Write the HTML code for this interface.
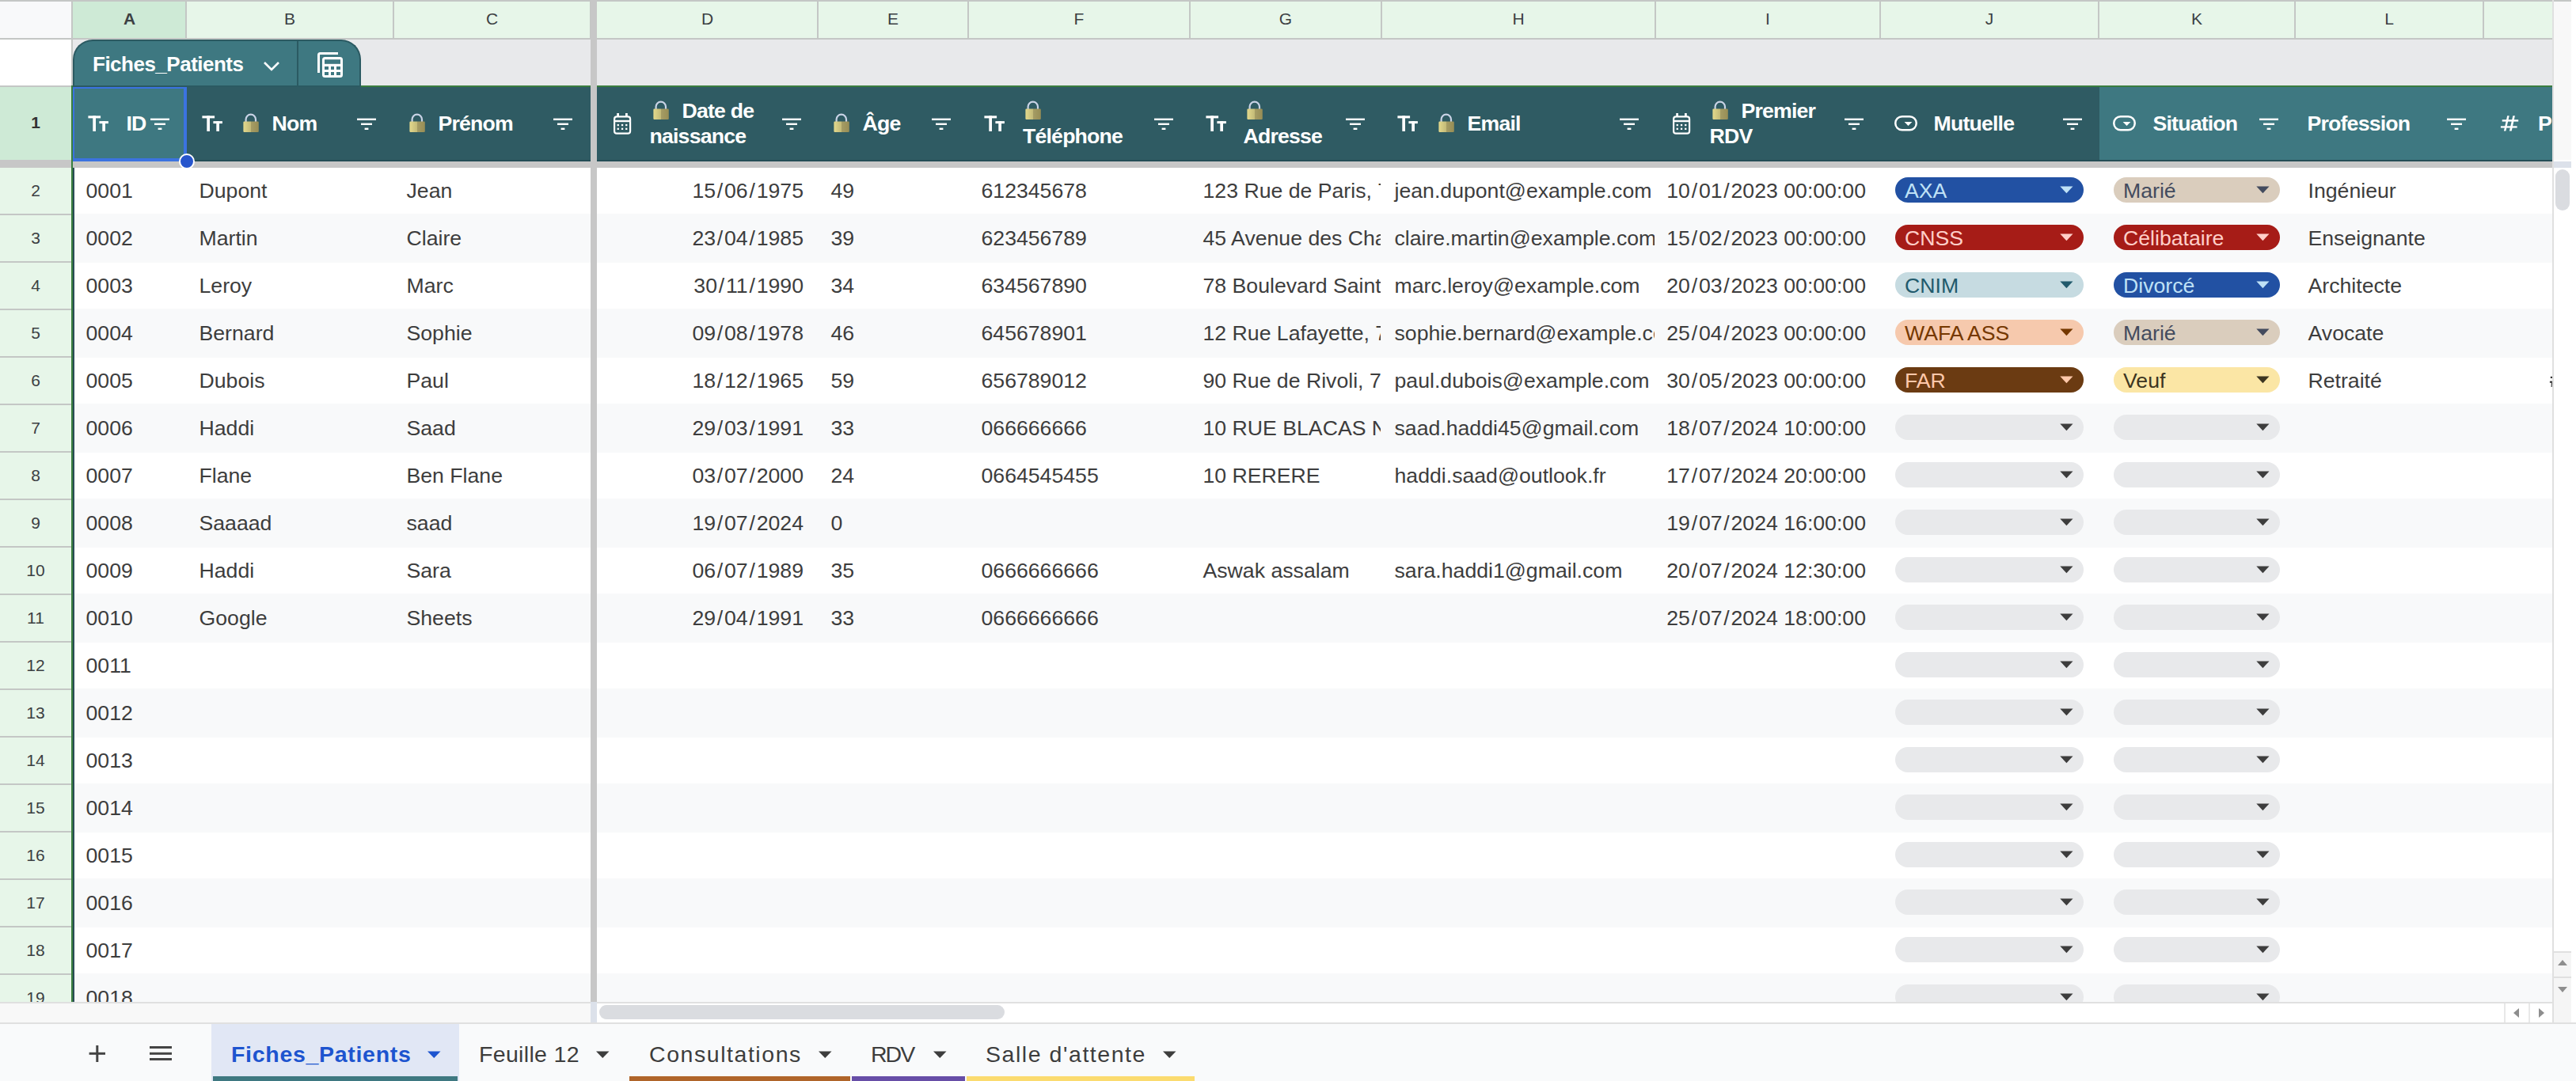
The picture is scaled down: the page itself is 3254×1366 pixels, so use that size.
<!DOCTYPE html>
<html><head><meta charset="utf-8"><title>Fiches_Patients</title>
<style>
html,body{margin:0;padding:0}
body{width:3254px;height:1366px;position:relative;overflow:hidden;background:#fff;font-family:"Liberation Sans",sans-serif}
body div, body svg{position:absolute;box-sizing:border-box}
.t{white-space:nowrap;line-height:1}
.sl{padding:0 1.8px}
</style></head><body>
<div style="left:0px;top:0px;width:3248px;height:50px;background:#c4c7c5;"></div>
<div style="left:0px;top:2px;width:90px;height:46px;background:#f8f9fa;"></div>
<div style="left:92px;top:2px;width:3132px;height:46px;background:#e7f6e9;"></div>
<div style="left:92px;top:2px;width:143px;height:46px;background:#ceead6;"></div>
<div style="left:234px;top:2px;width:2px;height:46px;background:#c4c7c5;"></div>
<div style="left:496px;top:2px;width:2px;height:46px;background:#c4c7c5;"></div>
<div style="left:745px;top:2px;width:2px;height:46px;background:#c4c7c5;"></div>
<div style="left:1032px;top:2px;width:2px;height:46px;background:#c4c7c5;"></div>
<div style="left:1222px;top:2px;width:2px;height:46px;background:#c4c7c5;"></div>
<div style="left:1502px;top:2px;width:2px;height:46px;background:#c4c7c5;"></div>
<div style="left:1744px;top:2px;width:2px;height:46px;background:#c4c7c5;"></div>
<div style="left:2090px;top:2px;width:2px;height:46px;background:#c4c7c5;"></div>
<div style="left:2374px;top:2px;width:2px;height:46px;background:#c4c7c5;"></div>
<div style="left:2650px;top:2px;width:2px;height:46px;background:#c4c7c5;"></div>
<div style="left:2898px;top:2px;width:2px;height:46px;background:#c4c7c5;"></div>
<div style="left:3136px;top:2px;width:2px;height:46px;background:#c4c7c5;"></div>
<div style="left:746px;top:0px;width:8px;height:1266px;background:#c7c7c7;"></div>
<div class="t" style="left:-36.5px;width:400px;top:12.72px;font-size:21px;color:#3c4043;font-weight:700;text-align:center;">A</div>
<div class="t" style="left:166.0px;width:400px;top:12.72px;font-size:21px;color:#3c4043;font-weight:400;text-align:center;">B</div>
<div class="t" style="left:421.5px;width:400px;top:12.72px;font-size:21px;color:#3c4043;font-weight:400;text-align:center;">C</div>
<div class="t" style="left:693.5px;width:400px;top:12.72px;font-size:21px;color:#3c4043;font-weight:400;text-align:center;">D</div>
<div class="t" style="left:928.0px;width:400px;top:12.72px;font-size:21px;color:#3c4043;font-weight:400;text-align:center;">E</div>
<div class="t" style="left:1163.0px;width:400px;top:12.72px;font-size:21px;color:#3c4043;font-weight:400;text-align:center;">F</div>
<div class="t" style="left:1424.0px;width:400px;top:12.72px;font-size:21px;color:#3c4043;font-weight:400;text-align:center;">G</div>
<div class="t" style="left:1718.0px;width:400px;top:12.72px;font-size:21px;color:#3c4043;font-weight:400;text-align:center;">H</div>
<div class="t" style="left:2033.0px;width:400px;top:12.72px;font-size:21px;color:#3c4043;font-weight:400;text-align:center;">I</div>
<div class="t" style="left:2313.0px;width:400px;top:12.72px;font-size:21px;color:#3c4043;font-weight:400;text-align:center;">J</div>
<div class="t" style="left:2575.0px;width:400px;top:12.72px;font-size:21px;color:#3c4043;font-weight:400;text-align:center;">K</div>
<div class="t" style="left:2818.0px;width:400px;top:12.72px;font-size:21px;color:#3c4043;font-weight:400;text-align:center;">L</div>
<div style="left:3226px;top:2px;width:22px;height:200px;background:#f8f8f8;"></div>
<div style="left:3224px;top:0px;width:2px;height:1266px;background:#e0e0e0;"></div>
<div style="left:0px;top:50px;width:90px;height:58px;background:#ffffff;"></div>
<div style="left:90px;top:50px;width:2px;height:58px;background:#c4c7c5;"></div>
<div style="left:92px;top:50px;width:3132px;height:58px;background:#e8e9eb;"></div>
<div style="left:746px;top:50px;width:8px;height:58px;background:#c7c7c7;"></div>
<div style="left:92px;top:50px;width:364px;height:58px;background:#3e7881;border:2px solid #2b5a62;border-bottom:none;border-radius:25px 25px 0 0;"></div>
<div style="left:375px;top:52px;width:2px;height:56px;background:#2b5a62"></div>
<div class="t" style="left:117px;top:67.99px;font-size:26px;color:#ffffff;font-weight:700;letter-spacing:-0.5px">Fiches_Patients</div>
<svg style="left:332px;top:76px" width="22" height="16" viewBox="0 0 22 16"><path d="M2 3 L11 12 L20 3" fill="none" stroke="#fff" stroke-width="2.6"/></svg>
<svg style="left:398px;top:63px" width="40" height="40" viewBox="0 0 40 40"><path d="M4.5 29 V6.5 Q4.5 4.5 6.5 4.5 H29" fill="none" stroke="#fff" stroke-width="3"/><rect x="9" y="9" width="26" height="26" rx="3.5" fill="#fff"/><rect x="12" y="12.2" width="20" height="5.6" fill="#3e7881"/><rect x="12" y="21" width="5" height="4" fill="#3e7881"/><rect x="20" y="21" width="4" height="4" fill="#3e7881"/><rect x="27" y="21" width="5" height="4" fill="#3e7881"/><rect x="12" y="28" width="5" height="4" fill="#3e7881"/><rect x="20" y="28" width="4" height="4" fill="#3e7881"/><rect x="27" y="28" width="5" height="4" fill="#3e7881"/></svg>
<div style="left:0px;top:108px;width:90px;height:94px;background:#ceead6;"></div>
<div style="left:0px;top:108px;width:90px;height:2px;background:#c4c7c5;"></div>
<div style="left:90px;top:108px;width:2px;height:94px;background:#c4c7c5;"></div>
<div class="t" style="left:-155px;width:400px;top:144.22px;font-size:21px;color:#333;font-weight:700;text-align:center;">1</div>
<div style="left:92px;top:108px;width:654px;height:96px;background:#2f5b63;"></div>
<div style="left:754px;top:108px;width:2470px;height:96px;background:#2f5b63;"></div>
<div style="left:2652px;top:108px;width:572px;height:96px;background:#3e7881;"></div>
<div style="left:92px;top:108px;width:144px;height:96px;background:#3e7881;"></div>
<div style="left:92px;top:108px;width:654px;height:2px;background:#3a7d3f;"></div>
<div style="left:754px;top:108px;width:2470px;height:2px;background:#3a7d3f;"></div>
<div style="left:92px;top:108px;width:364px;height:2px;background:#2b5a62;"></div>
<div style="left:92px;top:202px;width:654px;height:2px;background:#244d56;"></div>
<div style="left:754px;top:202px;width:2470px;height:2px;background:#244d56;"></div>
<div style="left:0px;top:202px;width:92px;height:10px;background:#c7c7c7;"></div>
<div style="left:92px;top:204px;width:3132px;height:8px;background:#c7c7c7;"></div>
<div style="left:3226px;top:204px;width:22px;height:8px;background:#dce1ea;"></div>
<svg style="left:111px;top:146px" width="28" height="22" viewBox="0 0 28 22"><rect x="0.4" y="0.3" width="15.7" height="3.1" fill="#fff"/><rect x="6.3" y="0.3" width="3.7" height="19.6" fill="#fff"/><rect x="14.4" y="7.1" width="11.5" height="3" fill="#fff"/><rect x="18.3" y="7.1" width="3.7" height="12.8" fill="#fff"/></svg>
<div class="t" style="left:159.5px;top:143.42px;font-size:26.67px;color:#ffffff;font-weight:700;letter-spacing:-0.8px">ID</div>
<svg style="left:189px;top:149px" width="26" height="16" viewBox="0 0 26 16"><rect x="1" y="0.6" width="24" height="2.4" fill="#fff"/><rect x="6" y="6.6" width="14" height="2.4" fill="#fff"/><rect x="10.6" y="12.6" width="4.8" height="2.4" fill="#fff"/></svg>
<svg style="left:255px;top:146px" width="28" height="22" viewBox="0 0 28 22"><rect x="0.4" y="0.3" width="15.7" height="3.1" fill="#fff"/><rect x="6.3" y="0.3" width="3.7" height="19.6" fill="#fff"/><rect x="14.4" y="7.1" width="11.5" height="3" fill="#fff"/><rect x="18.3" y="7.1" width="3.7" height="12.8" fill="#fff"/></svg>
<svg style="left:306px;top:143px" width="22" height="25" viewBox="0 0 22 25"><defs><linearGradient id="lg306" x1="0" x2="1" y1="0" y2="0"><stop offset="0" stop-color="#e3d98c"/><stop offset="0.5" stop-color="#c2b977"/><stop offset="0.52" stop-color="#a59c64"/><stop offset="1" stop-color="#978d55"/></linearGradient></defs><path d="M4.6 11 V7.8 A6.2 6.2 0 0 1 17 7.8 V11" fill="none" stroke="#c9d3e6" stroke-width="2.2"/><rect x="1.4" y="10.6" width="19.4" height="13.4" rx="1.2" fill="url(#lg306)"/></svg>
<div class="t" style="left:343.5px;top:143.42px;font-size:26.67px;color:#ffffff;font-weight:700;letter-spacing:-0.8px">Nom</div>
<svg style="left:450px;top:149px" width="26" height="16" viewBox="0 0 26 16"><rect x="1" y="0.6" width="24" height="2.4" fill="#fff"/><rect x="6" y="6.6" width="14" height="2.4" fill="#fff"/><rect x="10.6" y="12.6" width="4.8" height="2.4" fill="#fff"/></svg>
<svg style="left:516px;top:143px" width="22" height="25" viewBox="0 0 22 25"><defs><linearGradient id="lg516" x1="0" x2="1" y1="0" y2="0"><stop offset="0" stop-color="#e3d98c"/><stop offset="0.5" stop-color="#c2b977"/><stop offset="0.52" stop-color="#a59c64"/><stop offset="1" stop-color="#978d55"/></linearGradient></defs><path d="M4.6 11 V7.8 A6.2 6.2 0 0 1 17 7.8 V11" fill="none" stroke="#c9d3e6" stroke-width="2.2"/><rect x="1.4" y="10.6" width="19.4" height="13.4" rx="1.2" fill="url(#lg516)"/></svg>
<div class="t" style="left:553.5px;top:143.42px;font-size:26.67px;color:#ffffff;font-weight:700;letter-spacing:-0.8px">Prénom</div>
<svg style="left:698px;top:149px" width="26" height="16" viewBox="0 0 26 16"><rect x="1" y="0.6" width="24" height="2.4" fill="#fff"/><rect x="6" y="6.6" width="14" height="2.4" fill="#fff"/><rect x="10.6" y="12.6" width="4.8" height="2.4" fill="#fff"/></svg>
<svg style="left:775px;top:143px" width="24" height="28" viewBox="0 0 24 28"><rect x="1.1" y="4.4" width="20" height="21.3" rx="3" fill="none" stroke="#fff" stroke-width="2.2"/><rect x="1" y="8.8" width="21" height="2.4" fill="#fff"/><rect x="4.2" y="0" width="2.8" height="4" fill="#fff"/><rect x="15" y="0" width="2.8" height="4" fill="#fff"/><rect x="4.6" y="13.9" width="2.3" height="2.3" fill="#fff"/><rect x="9.9" y="13.9" width="2.3" height="2.3" fill="#fff"/><rect x="15.1" y="13.9" width="2.3" height="2.3" fill="#fff"/><rect x="4.6" y="18.7" width="2.3" height="2.3" fill="#fff"/><rect x="9.9" y="18.7" width="2.3" height="2.3" fill="#fff"/><rect x="15.1" y="18.7" width="2.3" height="2.3" fill="#fff"/></svg>
<svg style="left:824px;top:127px" width="22" height="25" viewBox="0 0 22 25"><defs><linearGradient id="lg824" x1="0" x2="1" y1="0" y2="0"><stop offset="0" stop-color="#e3d98c"/><stop offset="0.5" stop-color="#c2b977"/><stop offset="0.52" stop-color="#a59c64"/><stop offset="1" stop-color="#978d55"/></linearGradient></defs><path d="M4.6 11 V7.8 A6.2 6.2 0 0 1 17 7.8 V11" fill="none" stroke="#c9d3e6" stroke-width="2.2"/><rect x="1.4" y="10.6" width="19.4" height="13.4" rx="1.2" fill="url(#lg824)"/></svg>
<div class="t" style="left:861.5px;top:127.42px;font-size:26.67px;color:#ffffff;font-weight:700;letter-spacing:-0.8px">Date de</div>
<div class="t" style="left:820.5px;top:159.42px;font-size:26.67px;color:#ffffff;font-weight:700;letter-spacing:-0.8px">naissance</div>
<svg style="left:987px;top:149px" width="26" height="16" viewBox="0 0 26 16"><rect x="1" y="0.6" width="24" height="2.4" fill="#fff"/><rect x="6" y="6.6" width="14" height="2.4" fill="#fff"/><rect x="10.6" y="12.6" width="4.8" height="2.4" fill="#fff"/></svg>
<svg style="left:1052px;top:143px" width="22" height="25" viewBox="0 0 22 25"><defs><linearGradient id="lg1052" x1="0" x2="1" y1="0" y2="0"><stop offset="0" stop-color="#e3d98c"/><stop offset="0.5" stop-color="#c2b977"/><stop offset="0.52" stop-color="#a59c64"/><stop offset="1" stop-color="#978d55"/></linearGradient></defs><path d="M4.6 11 V7.8 A6.2 6.2 0 0 1 17 7.8 V11" fill="none" stroke="#c9d3e6" stroke-width="2.2"/><rect x="1.4" y="10.6" width="19.4" height="13.4" rx="1.2" fill="url(#lg1052)"/></svg>
<div class="t" style="left:1089.5px;top:143.42px;font-size:26.67px;color:#ffffff;font-weight:700;letter-spacing:-0.8px">Âge</div>
<svg style="left:1176px;top:149px" width="26" height="16" viewBox="0 0 26 16"><rect x="1" y="0.6" width="24" height="2.4" fill="#fff"/><rect x="6" y="6.6" width="14" height="2.4" fill="#fff"/><rect x="10.6" y="12.6" width="4.8" height="2.4" fill="#fff"/></svg>
<svg style="left:1243px;top:146px" width="28" height="22" viewBox="0 0 28 22"><rect x="0.4" y="0.3" width="15.7" height="3.1" fill="#fff"/><rect x="6.3" y="0.3" width="3.7" height="19.6" fill="#fff"/><rect x="14.4" y="7.1" width="11.5" height="3" fill="#fff"/><rect x="18.3" y="7.1" width="3.7" height="12.8" fill="#fff"/></svg>
<svg style="left:1294px;top:127px" width="22" height="25" viewBox="0 0 22 25"><defs><linearGradient id="lg1294" x1="0" x2="1" y1="0" y2="0"><stop offset="0" stop-color="#e3d98c"/><stop offset="0.5" stop-color="#c2b977"/><stop offset="0.52" stop-color="#a59c64"/><stop offset="1" stop-color="#978d55"/></linearGradient></defs><path d="M4.6 11 V7.8 A6.2 6.2 0 0 1 17 7.8 V11" fill="none" stroke="#c9d3e6" stroke-width="2.2"/><rect x="1.4" y="10.6" width="19.4" height="13.4" rx="1.2" fill="url(#lg1294)"/></svg>
<div class="t" style="left:1292px;top:159.42px;font-size:26.67px;color:#ffffff;font-weight:700;letter-spacing:-0.8px">Téléphone</div>
<svg style="left:1457px;top:149px" width="26" height="16" viewBox="0 0 26 16"><rect x="1" y="0.6" width="24" height="2.4" fill="#fff"/><rect x="6" y="6.6" width="14" height="2.4" fill="#fff"/><rect x="10.6" y="12.6" width="4.8" height="2.4" fill="#fff"/></svg>
<svg style="left:1523px;top:146px" width="28" height="22" viewBox="0 0 28 22"><rect x="0.4" y="0.3" width="15.7" height="3.1" fill="#fff"/><rect x="6.3" y="0.3" width="3.7" height="19.6" fill="#fff"/><rect x="14.4" y="7.1" width="11.5" height="3" fill="#fff"/><rect x="18.3" y="7.1" width="3.7" height="12.8" fill="#fff"/></svg>
<svg style="left:1574px;top:127px" width="22" height="25" viewBox="0 0 22 25"><defs><linearGradient id="lg1574" x1="0" x2="1" y1="0" y2="0"><stop offset="0" stop-color="#e3d98c"/><stop offset="0.5" stop-color="#c2b977"/><stop offset="0.52" stop-color="#a59c64"/><stop offset="1" stop-color="#978d55"/></linearGradient></defs><path d="M4.6 11 V7.8 A6.2 6.2 0 0 1 17 7.8 V11" fill="none" stroke="#c9d3e6" stroke-width="2.2"/><rect x="1.4" y="10.6" width="19.4" height="13.4" rx="1.2" fill="url(#lg1574)"/></svg>
<div class="t" style="left:1570.5px;top:159.42px;font-size:26.67px;color:#ffffff;font-weight:700;letter-spacing:-0.8px">Adresse</div>
<svg style="left:1699px;top:149px" width="26" height="16" viewBox="0 0 26 16"><rect x="1" y="0.6" width="24" height="2.4" fill="#fff"/><rect x="6" y="6.6" width="14" height="2.4" fill="#fff"/><rect x="10.6" y="12.6" width="4.8" height="2.4" fill="#fff"/></svg>
<svg style="left:1765px;top:146px" width="28" height="22" viewBox="0 0 28 22"><rect x="0.4" y="0.3" width="15.7" height="3.1" fill="#fff"/><rect x="6.3" y="0.3" width="3.7" height="19.6" fill="#fff"/><rect x="14.4" y="7.1" width="11.5" height="3" fill="#fff"/><rect x="18.3" y="7.1" width="3.7" height="12.8" fill="#fff"/></svg>
<svg style="left:1816px;top:143px" width="22" height="25" viewBox="0 0 22 25"><defs><linearGradient id="lg1816" x1="0" x2="1" y1="0" y2="0"><stop offset="0" stop-color="#e3d98c"/><stop offset="0.5" stop-color="#c2b977"/><stop offset="0.52" stop-color="#a59c64"/><stop offset="1" stop-color="#978d55"/></linearGradient></defs><path d="M4.6 11 V7.8 A6.2 6.2 0 0 1 17 7.8 V11" fill="none" stroke="#c9d3e6" stroke-width="2.2"/><rect x="1.4" y="10.6" width="19.4" height="13.4" rx="1.2" fill="url(#lg1816)"/></svg>
<div class="t" style="left:1853.5px;top:143.42px;font-size:26.67px;color:#ffffff;font-weight:700;letter-spacing:-0.8px">Email</div>
<svg style="left:2045px;top:149px" width="26" height="16" viewBox="0 0 26 16"><rect x="1" y="0.6" width="24" height="2.4" fill="#fff"/><rect x="6" y="6.6" width="14" height="2.4" fill="#fff"/><rect x="10.6" y="12.6" width="4.8" height="2.4" fill="#fff"/></svg>
<svg style="left:2112.5px;top:143px" width="24" height="28" viewBox="0 0 24 28"><rect x="1.1" y="4.4" width="20" height="21.3" rx="3" fill="none" stroke="#fff" stroke-width="2.2"/><rect x="1" y="8.8" width="21" height="2.4" fill="#fff"/><rect x="4.2" y="0" width="2.8" height="4" fill="#fff"/><rect x="15" y="0" width="2.8" height="4" fill="#fff"/><rect x="4.6" y="13.9" width="2.3" height="2.3" fill="#fff"/><rect x="9.9" y="13.9" width="2.3" height="2.3" fill="#fff"/><rect x="15.1" y="13.9" width="2.3" height="2.3" fill="#fff"/><rect x="4.6" y="18.7" width="2.3" height="2.3" fill="#fff"/><rect x="9.9" y="18.7" width="2.3" height="2.3" fill="#fff"/><rect x="15.1" y="18.7" width="2.3" height="2.3" fill="#fff"/></svg>
<svg style="left:2162px;top:127px" width="22" height="25" viewBox="0 0 22 25"><defs><linearGradient id="lg2162" x1="0" x2="1" y1="0" y2="0"><stop offset="0" stop-color="#e3d98c"/><stop offset="0.5" stop-color="#c2b977"/><stop offset="0.52" stop-color="#a59c64"/><stop offset="1" stop-color="#978d55"/></linearGradient></defs><path d="M4.6 11 V7.8 A6.2 6.2 0 0 1 17 7.8 V11" fill="none" stroke="#c9d3e6" stroke-width="2.2"/><rect x="1.4" y="10.6" width="19.4" height="13.4" rx="1.2" fill="url(#lg2162)"/></svg>
<div class="t" style="left:2199.5px;top:127.42px;font-size:26.67px;color:#ffffff;font-weight:700;letter-spacing:-0.8px">Premier</div>
<div class="t" style="left:2159.5px;top:159.42px;font-size:26.67px;color:#ffffff;font-weight:700;letter-spacing:-0.8px">RDV</div>
<svg style="left:2329px;top:149px" width="26" height="16" viewBox="0 0 26 16"><rect x="1" y="0.6" width="24" height="2.4" fill="#fff"/><rect x="6" y="6.6" width="14" height="2.4" fill="#fff"/><rect x="10.6" y="12.6" width="4.8" height="2.4" fill="#fff"/></svg>
<svg style="left:2393px;top:146px" width="30" height="21" viewBox="0 0 30 21"><rect x="1.25" y="1.25" width="26.5" height="17" rx="8.5" fill="none" stroke="#fff" stroke-width="2.5"/><path d="M12.6 8 H22.4 L17.5 13.1 Z" fill="#fff"/></svg>
<div class="t" style="left:2442.5px;top:143.42px;font-size:26.67px;color:#ffffff;font-weight:700;letter-spacing:-0.8px">Mutuelle</div>
<svg style="left:2605px;top:149px" width="26" height="16" viewBox="0 0 26 16"><rect x="1" y="0.6" width="24" height="2.4" fill="#fff"/><rect x="6" y="6.6" width="14" height="2.4" fill="#fff"/><rect x="10.6" y="12.6" width="4.8" height="2.4" fill="#fff"/></svg>
<svg style="left:2669px;top:146px" width="30" height="21" viewBox="0 0 30 21"><rect x="1.25" y="1.25" width="26.5" height="17" rx="8.5" fill="none" stroke="#fff" stroke-width="2.5"/><path d="M12.6 8 H22.4 L17.5 13.1 Z" fill="#fff"/></svg>
<div class="t" style="left:2719.5px;top:143.42px;font-size:26.67px;color:#ffffff;font-weight:700;letter-spacing:-0.8px">Situation</div>
<svg style="left:2853px;top:149px" width="26" height="16" viewBox="0 0 26 16"><rect x="1" y="0.6" width="24" height="2.4" fill="#fff"/><rect x="6" y="6.6" width="14" height="2.4" fill="#fff"/><rect x="10.6" y="12.6" width="4.8" height="2.4" fill="#fff"/></svg>
<div class="t" style="left:2914.5px;top:143.42px;font-size:26.67px;color:#ffffff;font-weight:700;letter-spacing:-0.8px">Profession</div>
<svg style="left:3090px;top:149px" width="26" height="16" viewBox="0 0 26 16"><rect x="1" y="0.6" width="24" height="2.4" fill="#fff"/><rect x="6" y="6.6" width="14" height="2.4" fill="#fff"/><rect x="10.6" y="12.6" width="4.8" height="2.4" fill="#fff"/></svg>
<div style="left:3137px;top:108px;width:87px;height:94px;overflow:hidden">
<svg style="left:21px;top:37px" width="26" height="23" viewBox="0 0 26 23"><rect x="2.7" y="6.2" width="20.5" height="2.4" fill="#fff"/><rect x="0.9" y="14.3" width="20.7" height="2.3" fill="#fff"/><path d="M9.2 1.3 H11.7 L7.4 20.6 H4.9 Z" fill="#fff"/><path d="M16.3 1.3 H18.9 L14.7 20.6 H11.9 Z" fill="#fff"/></svg>
<div class="t" style="left:69px;top:35.42px;font-size:26.67px;color:#ffffff;font-weight:700;letter-spacing:-0.8px">P</div>
</div>
<div style="left:92px;top:110px;width:144px;height:94px;border:solid #3b73e0;border-width:2px 4px 4px 2px;background:transparent"></div>
<div style="left:226px;top:194px;width:20px;height:20px;border-radius:50%;background:#2755cc;border:2px solid #fff"></div>
<div style="left:92px;top:212px;width:3132px;height:1054px;overflow:hidden">
<div style="left:0;top:0px;width:3132px;height:58px;background:#ffffff"></div>
<div style="left:0;top:58px;width:3132px;height:62px;background:#f8f9fa"></div>
<div style="left:0;top:120px;width:3132px;height:58px;background:#ffffff"></div>
<div style="left:0;top:178px;width:3132px;height:62px;background:#f8f9fa"></div>
<div style="left:0;top:240px;width:3132px;height:58px;background:#ffffff"></div>
<div style="left:0;top:298px;width:3132px;height:62px;background:#f8f9fa"></div>
<div style="left:0;top:360px;width:3132px;height:58px;background:#ffffff"></div>
<div style="left:0;top:418px;width:3132px;height:62px;background:#f8f9fa"></div>
<div style="left:0;top:480px;width:3132px;height:58px;background:#ffffff"></div>
<div style="left:0;top:538px;width:3132px;height:62px;background:#f8f9fa"></div>
<div style="left:0;top:600px;width:3132px;height:58px;background:#ffffff"></div>
<div style="left:0;top:658px;width:3132px;height:62px;background:#f8f9fa"></div>
<div style="left:0;top:720px;width:3132px;height:58px;background:#ffffff"></div>
<div style="left:0;top:778px;width:3132px;height:62px;background:#f8f9fa"></div>
<div style="left:0;top:840px;width:3132px;height:58px;background:#ffffff"></div>
<div style="left:0;top:898px;width:3132px;height:62px;background:#f8f9fa"></div>
<div style="left:0;top:960px;width:3132px;height:58px;background:#ffffff"></div>
<div style="left:0;top:1018px;width:3132px;height:62px;background:#f8f9fa"></div>
</div>
<div style="left:746px;top:212px;width:8px;height:1054px;background:#c7c7c7;"></div>
<div style="left:0px;top:212px;width:90px;height:1054px;background:#e7f6e9;"></div>
<div style="left:0px;top:270px;width:90px;height:2px;background:#c4c7c5;"></div>
<div class="t" style="left:-155px;width:400px;top:230.22px;font-size:21px;color:#3c4043;font-weight:400;text-align:center;">2</div>
<div style="left:0px;top:330px;width:90px;height:2px;background:#c4c7c5;"></div>
<div class="t" style="left:-155px;width:400px;top:290.22px;font-size:21px;color:#3c4043;font-weight:400;text-align:center;">3</div>
<div style="left:0px;top:390px;width:90px;height:2px;background:#c4c7c5;"></div>
<div class="t" style="left:-155px;width:400px;top:350.22px;font-size:21px;color:#3c4043;font-weight:400;text-align:center;">4</div>
<div style="left:0px;top:450px;width:90px;height:2px;background:#c4c7c5;"></div>
<div class="t" style="left:-155px;width:400px;top:410.22px;font-size:21px;color:#3c4043;font-weight:400;text-align:center;">5</div>
<div style="left:0px;top:510px;width:90px;height:2px;background:#c4c7c5;"></div>
<div class="t" style="left:-155px;width:400px;top:470.22px;font-size:21px;color:#3c4043;font-weight:400;text-align:center;">6</div>
<div style="left:0px;top:570px;width:90px;height:2px;background:#c4c7c5;"></div>
<div class="t" style="left:-155px;width:400px;top:530.22px;font-size:21px;color:#3c4043;font-weight:400;text-align:center;">7</div>
<div style="left:0px;top:630px;width:90px;height:2px;background:#c4c7c5;"></div>
<div class="t" style="left:-155px;width:400px;top:590.22px;font-size:21px;color:#3c4043;font-weight:400;text-align:center;">8</div>
<div style="left:0px;top:690px;width:90px;height:2px;background:#c4c7c5;"></div>
<div class="t" style="left:-155px;width:400px;top:650.22px;font-size:21px;color:#3c4043;font-weight:400;text-align:center;">9</div>
<div style="left:0px;top:750px;width:90px;height:2px;background:#c4c7c5;"></div>
<div class="t" style="left:-155px;width:400px;top:710.22px;font-size:21px;color:#3c4043;font-weight:400;text-align:center;">10</div>
<div style="left:0px;top:810px;width:90px;height:2px;background:#c4c7c5;"></div>
<div class="t" style="left:-155px;width:400px;top:770.22px;font-size:21px;color:#3c4043;font-weight:400;text-align:center;">11</div>
<div style="left:0px;top:870px;width:90px;height:2px;background:#c4c7c5;"></div>
<div class="t" style="left:-155px;width:400px;top:830.22px;font-size:21px;color:#3c4043;font-weight:400;text-align:center;">12</div>
<div style="left:0px;top:930px;width:90px;height:2px;background:#c4c7c5;"></div>
<div class="t" style="left:-155px;width:400px;top:890.22px;font-size:21px;color:#3c4043;font-weight:400;text-align:center;">13</div>
<div style="left:0px;top:990px;width:90px;height:2px;background:#c4c7c5;"></div>
<div class="t" style="left:-155px;width:400px;top:950.22px;font-size:21px;color:#3c4043;font-weight:400;text-align:center;">14</div>
<div style="left:0px;top:1050px;width:90px;height:2px;background:#c4c7c5;"></div>
<div class="t" style="left:-155px;width:400px;top:1010.22px;font-size:21px;color:#3c4043;font-weight:400;text-align:center;">15</div>
<div style="left:0px;top:1110px;width:90px;height:2px;background:#c4c7c5;"></div>
<div class="t" style="left:-155px;width:400px;top:1070.22px;font-size:21px;color:#3c4043;font-weight:400;text-align:center;">16</div>
<div style="left:0px;top:1170px;width:90px;height:2px;background:#c4c7c5;"></div>
<div class="t" style="left:-155px;width:400px;top:1130.22px;font-size:21px;color:#3c4043;font-weight:400;text-align:center;">17</div>
<div style="left:0px;top:1230px;width:90px;height:2px;background:#c4c7c5;"></div>
<div class="t" style="left:-155px;width:400px;top:1190.22px;font-size:21px;color:#3c4043;font-weight:400;text-align:center;">18</div>
<div class="t" style="left:-155px;width:400px;top:1250.22px;font-size:21px;color:#3c4043;font-weight:400;text-align:center;">19</div>
<div style="left:90px;top:108px;width:2px;height:1158px;background:#3a7f3f;"></div>
<div style="left:92px;top:212px;width:2px;height:1054px;background:#2a4d57;"></div>
<div style="left:0;top:0;width:3254px;height:1266px;overflow:hidden">
<div style="left:92px;top:212px;width:142px;height:60px;overflow:hidden">
<div class="t" style="left:16.5px;top:16.42px;font-size:26.67px;color:#3d3d3d;font-weight:400;">0001</div>
</div>
<div style="left:235px;top:212px;width:261px;height:60px;overflow:hidden">
<div class="t" style="left:16.5px;top:16.42px;font-size:26.67px;color:#3d3d3d;font-weight:400;">Dupont</div>
</div>
<div style="left:497px;top:212px;width:248px;height:60px;overflow:hidden">
<div class="t" style="left:16.5px;top:16.42px;font-size:26.67px;color:#3d3d3d;font-weight:400;">Jean</div>
</div>
<div class="t" style="right:2239px;top:228.42px;font-size:26.67px;color:#3d3d3d;font-weight:400;text-align:right;">15<span class="sl">/</span>06<span class="sl">/</span>1975</div>
<div style="left:1033px;top:212px;width:189px;height:60px;overflow:hidden">
<div class="t" style="left:16.5px;top:16.42px;font-size:26.67px;color:#3d3d3d;font-weight:400;">49</div>
</div>
<div style="left:1223px;top:212px;width:279px;height:60px;overflow:hidden">
<div class="t" style="left:16.5px;top:16.42px;font-size:26.67px;color:#3d3d3d;font-weight:400;">612345678</div>
</div>
<div style="left:1503px;top:212px;width:241px;height:60px;overflow:hidden">
<div class="t" style="left:16.5px;top:16.42px;font-size:26.67px;color:#3d3d3d;font-weight:400;">123 Rue de Paris, 75001 Paris</div>
</div>
<div style="left:1745px;top:212px;width:345px;height:60px;overflow:hidden">
<div class="t" style="left:16.5px;top:16.42px;font-size:26.67px;color:#3d3d3d;font-weight:400;">jean.dupont@example.com</div>
</div>
<div class="t" style="right:897px;top:228.42px;font-size:26.67px;color:#3d3d3d;font-weight:400;text-align:right;">10<span class="sl">/</span>01<span class="sl">/</span>2023 00:00:00</div>
<div style="left:2394px;top:224px;width:238px;height:32px;border-radius:16px;background:#2251a3"></div>
<div class="t" style="left:2406px;top:228.42px;font-size:26.67px;color:#bfe1f6;font-weight:400;">AXA</div>
<svg style="left:2602px;top:235px" width="17" height="10" viewBox="0 0 17 10"><path d="M0.3 0.5 H16.5 L8.4 9.2 Z" fill="#bfe1f6"/></svg>
<div style="left:2670px;top:224px;width:210px;height:32px;border-radius:16px;background:#dacdbd"></div>
<div class="t" style="left:2682px;top:228.42px;font-size:26.67px;color:#434b5e;font-weight:400;">Marié</div>
<svg style="left:2850px;top:235px" width="17" height="10" viewBox="0 0 17 10"><path d="M0.3 0.5 H16.5 L8.4 9.2 Z" fill="#434b5e"/></svg>
<div style="left:2899px;top:212px;width:237px;height:60px;overflow:hidden">
<div class="t" style="left:16.5px;top:16.42px;font-size:26.67px;color:#3d3d3d;font-weight:400;">Ingénieur</div>
</div>
</div>
<div style="left:0;top:0;width:3254px;height:1266px;overflow:hidden">
<div style="left:92px;top:272px;width:142px;height:60px;overflow:hidden">
<div class="t" style="left:16.5px;top:16.42px;font-size:26.67px;color:#3d3d3d;font-weight:400;">0002</div>
</div>
<div style="left:235px;top:272px;width:261px;height:60px;overflow:hidden">
<div class="t" style="left:16.5px;top:16.42px;font-size:26.67px;color:#3d3d3d;font-weight:400;">Martin</div>
</div>
<div style="left:497px;top:272px;width:248px;height:60px;overflow:hidden">
<div class="t" style="left:16.5px;top:16.42px;font-size:26.67px;color:#3d3d3d;font-weight:400;">Claire</div>
</div>
<div class="t" style="right:2239px;top:288.42px;font-size:26.67px;color:#3d3d3d;font-weight:400;text-align:right;">23<span class="sl">/</span>04<span class="sl">/</span>1985</div>
<div style="left:1033px;top:272px;width:189px;height:60px;overflow:hidden">
<div class="t" style="left:16.5px;top:16.42px;font-size:26.67px;color:#3d3d3d;font-weight:400;">39</div>
</div>
<div style="left:1223px;top:272px;width:279px;height:60px;overflow:hidden">
<div class="t" style="left:16.5px;top:16.42px;font-size:26.67px;color:#3d3d3d;font-weight:400;">623456789</div>
</div>
<div style="left:1503px;top:272px;width:241px;height:60px;overflow:hidden">
<div class="t" style="left:16.5px;top:16.42px;font-size:26.67px;color:#3d3d3d;font-weight:400;">45 Avenue des Champs-Élysées</div>
</div>
<div style="left:1745px;top:272px;width:345px;height:60px;overflow:hidden">
<div class="t" style="left:16.5px;top:16.42px;font-size:26.67px;color:#3d3d3d;font-weight:400;">claire.martin@example.com</div>
</div>
<div class="t" style="right:897px;top:288.42px;font-size:26.67px;color:#3d3d3d;font-weight:400;text-align:right;">15<span class="sl">/</span>02<span class="sl">/</span>2023 00:00:00</div>
<div style="left:2394px;top:284px;width:238px;height:32px;border-radius:16px;background:#a61c17"></div>
<div class="t" style="left:2406px;top:288.42px;font-size:26.67px;color:#ffcfc9;font-weight:400;">CNSS</div>
<svg style="left:2602px;top:295px" width="17" height="10" viewBox="0 0 17 10"><path d="M0.3 0.5 H16.5 L8.4 9.2 Z" fill="#ffcfc9"/></svg>
<div style="left:2670px;top:284px;width:210px;height:32px;border-radius:16px;background:#a61c17"></div>
<div class="t" style="left:2682px;top:288.42px;font-size:26.67px;color:#ffcfc9;font-weight:400;">Célibataire</div>
<svg style="left:2850px;top:295px" width="17" height="10" viewBox="0 0 17 10"><path d="M0.3 0.5 H16.5 L8.4 9.2 Z" fill="#ffcfc9"/></svg>
<div style="left:2899px;top:272px;width:237px;height:60px;overflow:hidden">
<div class="t" style="left:16.5px;top:16.42px;font-size:26.67px;color:#3d3d3d;font-weight:400;">Enseignante</div>
</div>
</div>
<div style="left:0;top:0;width:3254px;height:1266px;overflow:hidden">
<div style="left:92px;top:332px;width:142px;height:60px;overflow:hidden">
<div class="t" style="left:16.5px;top:16.42px;font-size:26.67px;color:#3d3d3d;font-weight:400;">0003</div>
</div>
<div style="left:235px;top:332px;width:261px;height:60px;overflow:hidden">
<div class="t" style="left:16.5px;top:16.42px;font-size:26.67px;color:#3d3d3d;font-weight:400;">Leroy</div>
</div>
<div style="left:497px;top:332px;width:248px;height:60px;overflow:hidden">
<div class="t" style="left:16.5px;top:16.42px;font-size:26.67px;color:#3d3d3d;font-weight:400;">Marc</div>
</div>
<div class="t" style="right:2239px;top:348.42px;font-size:26.67px;color:#3d3d3d;font-weight:400;text-align:right;">30<span class="sl">/</span>11<span class="sl">/</span>1990</div>
<div style="left:1033px;top:332px;width:189px;height:60px;overflow:hidden">
<div class="t" style="left:16.5px;top:16.42px;font-size:26.67px;color:#3d3d3d;font-weight:400;">34</div>
</div>
<div style="left:1223px;top:332px;width:279px;height:60px;overflow:hidden">
<div class="t" style="left:16.5px;top:16.42px;font-size:26.67px;color:#3d3d3d;font-weight:400;">634567890</div>
</div>
<div style="left:1503px;top:332px;width:241px;height:60px;overflow:hidden">
<div class="t" style="left:16.5px;top:16.42px;font-size:26.67px;color:#3d3d3d;font-weight:400;">78 Boulevard Saint-Germain</div>
</div>
<div style="left:1745px;top:332px;width:345px;height:60px;overflow:hidden">
<div class="t" style="left:16.5px;top:16.42px;font-size:26.67px;color:#3d3d3d;font-weight:400;">marc.leroy@example.com</div>
</div>
<div class="t" style="right:897px;top:348.42px;font-size:26.67px;color:#3d3d3d;font-weight:400;text-align:right;">20<span class="sl">/</span>03<span class="sl">/</span>2023 00:00:00</div>
<div style="left:2394px;top:344px;width:238px;height:32px;border-radius:16px;background:#c6dbe1"></div>
<div class="t" style="left:2406px;top:348.42px;font-size:26.67px;color:#215a6c;font-weight:400;">CNIM</div>
<svg style="left:2602px;top:355px" width="17" height="10" viewBox="0 0 17 10"><path d="M0.3 0.5 H16.5 L8.4 9.2 Z" fill="#215a6c"/></svg>
<div style="left:2670px;top:344px;width:210px;height:32px;border-radius:16px;background:#2251a3"></div>
<div class="t" style="left:2682px;top:348.42px;font-size:26.67px;color:#bfe1f6;font-weight:400;">Divorcé</div>
<svg style="left:2850px;top:355px" width="17" height="10" viewBox="0 0 17 10"><path d="M0.3 0.5 H16.5 L8.4 9.2 Z" fill="#bfe1f6"/></svg>
<div style="left:2899px;top:332px;width:237px;height:60px;overflow:hidden">
<div class="t" style="left:16.5px;top:16.42px;font-size:26.67px;color:#3d3d3d;font-weight:400;">Architecte</div>
</div>
</div>
<div style="left:0;top:0;width:3254px;height:1266px;overflow:hidden">
<div style="left:92px;top:392px;width:142px;height:60px;overflow:hidden">
<div class="t" style="left:16.5px;top:16.42px;font-size:26.67px;color:#3d3d3d;font-weight:400;">0004</div>
</div>
<div style="left:235px;top:392px;width:261px;height:60px;overflow:hidden">
<div class="t" style="left:16.5px;top:16.42px;font-size:26.67px;color:#3d3d3d;font-weight:400;">Bernard</div>
</div>
<div style="left:497px;top:392px;width:248px;height:60px;overflow:hidden">
<div class="t" style="left:16.5px;top:16.42px;font-size:26.67px;color:#3d3d3d;font-weight:400;">Sophie</div>
</div>
<div class="t" style="right:2239px;top:408.42px;font-size:26.67px;color:#3d3d3d;font-weight:400;text-align:right;">09<span class="sl">/</span>08<span class="sl">/</span>1978</div>
<div style="left:1033px;top:392px;width:189px;height:60px;overflow:hidden">
<div class="t" style="left:16.5px;top:16.42px;font-size:26.67px;color:#3d3d3d;font-weight:400;">46</div>
</div>
<div style="left:1223px;top:392px;width:279px;height:60px;overflow:hidden">
<div class="t" style="left:16.5px;top:16.42px;font-size:26.67px;color:#3d3d3d;font-weight:400;">645678901</div>
</div>
<div style="left:1503px;top:392px;width:241px;height:60px;overflow:hidden">
<div class="t" style="left:16.5px;top:16.42px;font-size:26.67px;color:#3d3d3d;font-weight:400;">12 Rue Lafayette, 75009 Paris</div>
</div>
<div style="left:1745px;top:392px;width:345px;height:60px;overflow:hidden">
<div class="t" style="left:16.5px;top:16.42px;font-size:26.67px;color:#3d3d3d;font-weight:400;">sophie.bernard@example.com</div>
</div>
<div class="t" style="right:897px;top:408.42px;font-size:26.67px;color:#3d3d3d;font-weight:400;text-align:right;">25<span class="sl">/</span>04<span class="sl">/</span>2023 00:00:00</div>
<div style="left:2394px;top:404px;width:238px;height:32px;border-radius:16px;background:#f6c9ad"></div>
<div class="t" style="left:2406px;top:408.42px;font-size:26.67px;color:#753800;font-weight:400;">WAFA ASS</div>
<svg style="left:2602px;top:415px" width="17" height="10" viewBox="0 0 17 10"><path d="M0.3 0.5 H16.5 L8.4 9.2 Z" fill="#753800"/></svg>
<div style="left:2670px;top:404px;width:210px;height:32px;border-radius:16px;background:#dacdbd"></div>
<div class="t" style="left:2682px;top:408.42px;font-size:26.67px;color:#434b5e;font-weight:400;">Marié</div>
<svg style="left:2850px;top:415px" width="17" height="10" viewBox="0 0 17 10"><path d="M0.3 0.5 H16.5 L8.4 9.2 Z" fill="#434b5e"/></svg>
<div style="left:2899px;top:392px;width:237px;height:60px;overflow:hidden">
<div class="t" style="left:16.5px;top:16.42px;font-size:26.67px;color:#3d3d3d;font-weight:400;">Avocate</div>
</div>
</div>
<div style="left:0;top:0;width:3254px;height:1266px;overflow:hidden">
<div style="left:92px;top:452px;width:142px;height:60px;overflow:hidden">
<div class="t" style="left:16.5px;top:16.42px;font-size:26.67px;color:#3d3d3d;font-weight:400;">0005</div>
</div>
<div style="left:235px;top:452px;width:261px;height:60px;overflow:hidden">
<div class="t" style="left:16.5px;top:16.42px;font-size:26.67px;color:#3d3d3d;font-weight:400;">Dubois</div>
</div>
<div style="left:497px;top:452px;width:248px;height:60px;overflow:hidden">
<div class="t" style="left:16.5px;top:16.42px;font-size:26.67px;color:#3d3d3d;font-weight:400;">Paul</div>
</div>
<div class="t" style="right:2239px;top:468.42px;font-size:26.67px;color:#3d3d3d;font-weight:400;text-align:right;">18<span class="sl">/</span>12<span class="sl">/</span>1965</div>
<div style="left:1033px;top:452px;width:189px;height:60px;overflow:hidden">
<div class="t" style="left:16.5px;top:16.42px;font-size:26.67px;color:#3d3d3d;font-weight:400;">59</div>
</div>
<div style="left:1223px;top:452px;width:279px;height:60px;overflow:hidden">
<div class="t" style="left:16.5px;top:16.42px;font-size:26.67px;color:#3d3d3d;font-weight:400;">656789012</div>
</div>
<div style="left:1503px;top:452px;width:241px;height:60px;overflow:hidden">
<div class="t" style="left:16.5px;top:16.42px;font-size:26.67px;color:#3d3d3d;font-weight:400;">90 Rue de Rivoli, 75004 Paris</div>
</div>
<div style="left:1745px;top:452px;width:345px;height:60px;overflow:hidden">
<div class="t" style="left:16.5px;top:16.42px;font-size:26.67px;color:#3d3d3d;font-weight:400;">paul.dubois@example.com</div>
</div>
<div class="t" style="right:897px;top:468.42px;font-size:26.67px;color:#3d3d3d;font-weight:400;text-align:right;">30<span class="sl">/</span>05<span class="sl">/</span>2023 00:00:00</div>
<div style="left:2394px;top:464px;width:238px;height:32px;border-radius:16px;background:#6b3b12"></div>
<div class="t" style="left:2406px;top:468.42px;font-size:26.67px;color:#ffc8aa;font-weight:400;">FAR</div>
<svg style="left:2602px;top:475px" width="17" height="10" viewBox="0 0 17 10"><path d="M0.3 0.5 H16.5 L8.4 9.2 Z" fill="#ffc8aa"/></svg>
<div style="left:2670px;top:464px;width:210px;height:32px;border-radius:16px;background:#fbe6a5"></div>
<div class="t" style="left:2682px;top:468.42px;font-size:26.67px;color:#3c3521;font-weight:400;">Veuf</div>
<svg style="left:2850px;top:475px" width="17" height="10" viewBox="0 0 17 10"><path d="M0.3 0.5 H16.5 L8.4 9.2 Z" fill="#3c3521"/></svg>
<div style="left:2899px;top:452px;width:237px;height:60px;overflow:hidden">
<div class="t" style="left:16.5px;top:16.42px;font-size:26.67px;color:#3d3d3d;font-weight:400;">Retraité</div>
</div>
</div>
<div style="left:0;top:0;width:3254px;height:1266px;overflow:hidden">
<div style="left:92px;top:512px;width:142px;height:60px;overflow:hidden">
<div class="t" style="left:16.5px;top:16.42px;font-size:26.67px;color:#3d3d3d;font-weight:400;">0006</div>
</div>
<div style="left:235px;top:512px;width:261px;height:60px;overflow:hidden">
<div class="t" style="left:16.5px;top:16.42px;font-size:26.67px;color:#3d3d3d;font-weight:400;">Haddi</div>
</div>
<div style="left:497px;top:512px;width:248px;height:60px;overflow:hidden">
<div class="t" style="left:16.5px;top:16.42px;font-size:26.67px;color:#3d3d3d;font-weight:400;">Saad</div>
</div>
<div class="t" style="right:2239px;top:528.42px;font-size:26.67px;color:#3d3d3d;font-weight:400;text-align:right;">29<span class="sl">/</span>03<span class="sl">/</span>1991</div>
<div style="left:1033px;top:512px;width:189px;height:60px;overflow:hidden">
<div class="t" style="left:16.5px;top:16.42px;font-size:26.67px;color:#3d3d3d;font-weight:400;">33</div>
</div>
<div style="left:1223px;top:512px;width:279px;height:60px;overflow:hidden">
<div class="t" style="left:16.5px;top:16.42px;font-size:26.67px;color:#3d3d3d;font-weight:400;">066666666</div>
</div>
<div style="left:1503px;top:512px;width:241px;height:60px;overflow:hidden">
<div class="t" style="left:16.5px;top:16.42px;font-size:26.67px;color:#3d3d3d;font-weight:400;">10 RUE BLACAS NICE</div>
</div>
<div style="left:1745px;top:512px;width:345px;height:60px;overflow:hidden">
<div class="t" style="left:16.5px;top:16.42px;font-size:26.67px;color:#3d3d3d;font-weight:400;">saad.haddi45@gmail.com</div>
</div>
<div class="t" style="right:897px;top:528.42px;font-size:26.67px;color:#3d3d3d;font-weight:400;text-align:right;">18<span class="sl">/</span>07<span class="sl">/</span>2024 10:00:00</div>
<div style="left:2394px;top:524px;width:238px;height:32px;border-radius:16px;background:#e8e9eb"></div>
<svg style="left:2602px;top:535px" width="17" height="10" viewBox="0 0 17 10"><path d="M0.3 0.5 H16.5 L8.4 9.2 Z" fill="#3d3d3d"/></svg>
<div style="left:2670px;top:524px;width:210px;height:32px;border-radius:16px;background:#e8e9eb"></div>
<svg style="left:2850px;top:535px" width="17" height="10" viewBox="0 0 17 10"><path d="M0.3 0.5 H16.5 L8.4 9.2 Z" fill="#3d3d3d"/></svg>
</div>
<div style="left:0;top:0;width:3254px;height:1266px;overflow:hidden">
<div style="left:92px;top:572px;width:142px;height:60px;overflow:hidden">
<div class="t" style="left:16.5px;top:16.42px;font-size:26.67px;color:#3d3d3d;font-weight:400;">0007</div>
</div>
<div style="left:235px;top:572px;width:261px;height:60px;overflow:hidden">
<div class="t" style="left:16.5px;top:16.42px;font-size:26.67px;color:#3d3d3d;font-weight:400;">Flane</div>
</div>
<div style="left:497px;top:572px;width:248px;height:60px;overflow:hidden">
<div class="t" style="left:16.5px;top:16.42px;font-size:26.67px;color:#3d3d3d;font-weight:400;">Ben Flane</div>
</div>
<div class="t" style="right:2239px;top:588.42px;font-size:26.67px;color:#3d3d3d;font-weight:400;text-align:right;">03<span class="sl">/</span>07<span class="sl">/</span>2000</div>
<div style="left:1033px;top:572px;width:189px;height:60px;overflow:hidden">
<div class="t" style="left:16.5px;top:16.42px;font-size:26.67px;color:#3d3d3d;font-weight:400;">24</div>
</div>
<div style="left:1223px;top:572px;width:279px;height:60px;overflow:hidden">
<div class="t" style="left:16.5px;top:16.42px;font-size:26.67px;color:#3d3d3d;font-weight:400;">0664545455</div>
</div>
<div style="left:1503px;top:572px;width:241px;height:60px;overflow:hidden">
<div class="t" style="left:16.5px;top:16.42px;font-size:26.67px;color:#3d3d3d;font-weight:400;">10 RERERE</div>
</div>
<div style="left:1745px;top:572px;width:345px;height:60px;overflow:hidden">
<div class="t" style="left:16.5px;top:16.42px;font-size:26.67px;color:#3d3d3d;font-weight:400;">haddi.saad@outlook.fr</div>
</div>
<div class="t" style="right:897px;top:588.42px;font-size:26.67px;color:#3d3d3d;font-weight:400;text-align:right;">17<span class="sl">/</span>07<span class="sl">/</span>2024 20:00:00</div>
<div style="left:2394px;top:584px;width:238px;height:32px;border-radius:16px;background:#e8e9eb"></div>
<svg style="left:2602px;top:595px" width="17" height="10" viewBox="0 0 17 10"><path d="M0.3 0.5 H16.5 L8.4 9.2 Z" fill="#3d3d3d"/></svg>
<div style="left:2670px;top:584px;width:210px;height:32px;border-radius:16px;background:#e8e9eb"></div>
<svg style="left:2850px;top:595px" width="17" height="10" viewBox="0 0 17 10"><path d="M0.3 0.5 H16.5 L8.4 9.2 Z" fill="#3d3d3d"/></svg>
</div>
<div style="left:0;top:0;width:3254px;height:1266px;overflow:hidden">
<div style="left:92px;top:632px;width:142px;height:60px;overflow:hidden">
<div class="t" style="left:16.5px;top:16.42px;font-size:26.67px;color:#3d3d3d;font-weight:400;">0008</div>
</div>
<div style="left:235px;top:632px;width:261px;height:60px;overflow:hidden">
<div class="t" style="left:16.5px;top:16.42px;font-size:26.67px;color:#3d3d3d;font-weight:400;">Saaaad</div>
</div>
<div style="left:497px;top:632px;width:248px;height:60px;overflow:hidden">
<div class="t" style="left:16.5px;top:16.42px;font-size:26.67px;color:#3d3d3d;font-weight:400;">saad</div>
</div>
<div class="t" style="right:2239px;top:648.42px;font-size:26.67px;color:#3d3d3d;font-weight:400;text-align:right;">19<span class="sl">/</span>07<span class="sl">/</span>2024</div>
<div style="left:1033px;top:632px;width:189px;height:60px;overflow:hidden">
<div class="t" style="left:16.5px;top:16.42px;font-size:26.67px;color:#3d3d3d;font-weight:400;">0</div>
</div>
<div class="t" style="right:897px;top:648.42px;font-size:26.67px;color:#3d3d3d;font-weight:400;text-align:right;">19<span class="sl">/</span>07<span class="sl">/</span>2024 16:00:00</div>
<div style="left:2394px;top:644px;width:238px;height:32px;border-radius:16px;background:#e8e9eb"></div>
<svg style="left:2602px;top:655px" width="17" height="10" viewBox="0 0 17 10"><path d="M0.3 0.5 H16.5 L8.4 9.2 Z" fill="#3d3d3d"/></svg>
<div style="left:2670px;top:644px;width:210px;height:32px;border-radius:16px;background:#e8e9eb"></div>
<svg style="left:2850px;top:655px" width="17" height="10" viewBox="0 0 17 10"><path d="M0.3 0.5 H16.5 L8.4 9.2 Z" fill="#3d3d3d"/></svg>
</div>
<div style="left:0;top:0;width:3254px;height:1266px;overflow:hidden">
<div style="left:92px;top:692px;width:142px;height:60px;overflow:hidden">
<div class="t" style="left:16.5px;top:16.42px;font-size:26.67px;color:#3d3d3d;font-weight:400;">0009</div>
</div>
<div style="left:235px;top:692px;width:261px;height:60px;overflow:hidden">
<div class="t" style="left:16.5px;top:16.42px;font-size:26.67px;color:#3d3d3d;font-weight:400;">Haddi</div>
</div>
<div style="left:497px;top:692px;width:248px;height:60px;overflow:hidden">
<div class="t" style="left:16.5px;top:16.42px;font-size:26.67px;color:#3d3d3d;font-weight:400;">Sara</div>
</div>
<div class="t" style="right:2239px;top:708.42px;font-size:26.67px;color:#3d3d3d;font-weight:400;text-align:right;">06<span class="sl">/</span>07<span class="sl">/</span>1989</div>
<div style="left:1033px;top:692px;width:189px;height:60px;overflow:hidden">
<div class="t" style="left:16.5px;top:16.42px;font-size:26.67px;color:#3d3d3d;font-weight:400;">35</div>
</div>
<div style="left:1223px;top:692px;width:279px;height:60px;overflow:hidden">
<div class="t" style="left:16.5px;top:16.42px;font-size:26.67px;color:#3d3d3d;font-weight:400;">0666666666</div>
</div>
<div style="left:1503px;top:692px;width:241px;height:60px;overflow:hidden">
<div class="t" style="left:16.5px;top:16.42px;font-size:26.67px;color:#3d3d3d;font-weight:400;">Aswak assalam</div>
</div>
<div style="left:1745px;top:692px;width:345px;height:60px;overflow:hidden">
<div class="t" style="left:16.5px;top:16.42px;font-size:26.67px;color:#3d3d3d;font-weight:400;">sara.haddi1@gmail.com</div>
</div>
<div class="t" style="right:897px;top:708.42px;font-size:26.67px;color:#3d3d3d;font-weight:400;text-align:right;">20<span class="sl">/</span>07<span class="sl">/</span>2024 12:30:00</div>
<div style="left:2394px;top:704px;width:238px;height:32px;border-radius:16px;background:#e8e9eb"></div>
<svg style="left:2602px;top:715px" width="17" height="10" viewBox="0 0 17 10"><path d="M0.3 0.5 H16.5 L8.4 9.2 Z" fill="#3d3d3d"/></svg>
<div style="left:2670px;top:704px;width:210px;height:32px;border-radius:16px;background:#e8e9eb"></div>
<svg style="left:2850px;top:715px" width="17" height="10" viewBox="0 0 17 10"><path d="M0.3 0.5 H16.5 L8.4 9.2 Z" fill="#3d3d3d"/></svg>
</div>
<div style="left:0;top:0;width:3254px;height:1266px;overflow:hidden">
<div style="left:92px;top:752px;width:142px;height:60px;overflow:hidden">
<div class="t" style="left:16.5px;top:16.42px;font-size:26.67px;color:#3d3d3d;font-weight:400;">0010</div>
</div>
<div style="left:235px;top:752px;width:261px;height:60px;overflow:hidden">
<div class="t" style="left:16.5px;top:16.42px;font-size:26.67px;color:#3d3d3d;font-weight:400;">Google</div>
</div>
<div style="left:497px;top:752px;width:248px;height:60px;overflow:hidden">
<div class="t" style="left:16.5px;top:16.42px;font-size:26.67px;color:#3d3d3d;font-weight:400;">Sheets</div>
</div>
<div class="t" style="right:2239px;top:768.42px;font-size:26.67px;color:#3d3d3d;font-weight:400;text-align:right;">29<span class="sl">/</span>04<span class="sl">/</span>1991</div>
<div style="left:1033px;top:752px;width:189px;height:60px;overflow:hidden">
<div class="t" style="left:16.5px;top:16.42px;font-size:26.67px;color:#3d3d3d;font-weight:400;">33</div>
</div>
<div style="left:1223px;top:752px;width:279px;height:60px;overflow:hidden">
<div class="t" style="left:16.5px;top:16.42px;font-size:26.67px;color:#3d3d3d;font-weight:400;">0666666666</div>
</div>
<div class="t" style="right:897px;top:768.42px;font-size:26.67px;color:#3d3d3d;font-weight:400;text-align:right;">25<span class="sl">/</span>07<span class="sl">/</span>2024 18:00:00</div>
<div style="left:2394px;top:764px;width:238px;height:32px;border-radius:16px;background:#e8e9eb"></div>
<svg style="left:2602px;top:775px" width="17" height="10" viewBox="0 0 17 10"><path d="M0.3 0.5 H16.5 L8.4 9.2 Z" fill="#3d3d3d"/></svg>
<div style="left:2670px;top:764px;width:210px;height:32px;border-radius:16px;background:#e8e9eb"></div>
<svg style="left:2850px;top:775px" width="17" height="10" viewBox="0 0 17 10"><path d="M0.3 0.5 H16.5 L8.4 9.2 Z" fill="#3d3d3d"/></svg>
</div>
<div style="left:0;top:0;width:3254px;height:1266px;overflow:hidden">
<div style="left:92px;top:812px;width:142px;height:60px;overflow:hidden">
<div class="t" style="left:16.5px;top:16.42px;font-size:26.67px;color:#3d3d3d;font-weight:400;">0011</div>
</div>
<div style="left:2394px;top:824px;width:238px;height:32px;border-radius:16px;background:#e8e9eb"></div>
<svg style="left:2602px;top:835px" width="17" height="10" viewBox="0 0 17 10"><path d="M0.3 0.5 H16.5 L8.4 9.2 Z" fill="#3d3d3d"/></svg>
<div style="left:2670px;top:824px;width:210px;height:32px;border-radius:16px;background:#e8e9eb"></div>
<svg style="left:2850px;top:835px" width="17" height="10" viewBox="0 0 17 10"><path d="M0.3 0.5 H16.5 L8.4 9.2 Z" fill="#3d3d3d"/></svg>
</div>
<div style="left:0;top:0;width:3254px;height:1266px;overflow:hidden">
<div style="left:92px;top:872px;width:142px;height:60px;overflow:hidden">
<div class="t" style="left:16.5px;top:16.42px;font-size:26.67px;color:#3d3d3d;font-weight:400;">0012</div>
</div>
<div style="left:2394px;top:884px;width:238px;height:32px;border-radius:16px;background:#e8e9eb"></div>
<svg style="left:2602px;top:895px" width="17" height="10" viewBox="0 0 17 10"><path d="M0.3 0.5 H16.5 L8.4 9.2 Z" fill="#3d3d3d"/></svg>
<div style="left:2670px;top:884px;width:210px;height:32px;border-radius:16px;background:#e8e9eb"></div>
<svg style="left:2850px;top:895px" width="17" height="10" viewBox="0 0 17 10"><path d="M0.3 0.5 H16.5 L8.4 9.2 Z" fill="#3d3d3d"/></svg>
</div>
<div style="left:0;top:0;width:3254px;height:1266px;overflow:hidden">
<div style="left:92px;top:932px;width:142px;height:60px;overflow:hidden">
<div class="t" style="left:16.5px;top:16.42px;font-size:26.67px;color:#3d3d3d;font-weight:400;">0013</div>
</div>
<div style="left:2394px;top:944px;width:238px;height:32px;border-radius:16px;background:#e8e9eb"></div>
<svg style="left:2602px;top:955px" width="17" height="10" viewBox="0 0 17 10"><path d="M0.3 0.5 H16.5 L8.4 9.2 Z" fill="#3d3d3d"/></svg>
<div style="left:2670px;top:944px;width:210px;height:32px;border-radius:16px;background:#e8e9eb"></div>
<svg style="left:2850px;top:955px" width="17" height="10" viewBox="0 0 17 10"><path d="M0.3 0.5 H16.5 L8.4 9.2 Z" fill="#3d3d3d"/></svg>
</div>
<div style="left:0;top:0;width:3254px;height:1266px;overflow:hidden">
<div style="left:92px;top:992px;width:142px;height:60px;overflow:hidden">
<div class="t" style="left:16.5px;top:16.42px;font-size:26.67px;color:#3d3d3d;font-weight:400;">0014</div>
</div>
<div style="left:2394px;top:1004px;width:238px;height:32px;border-radius:16px;background:#e8e9eb"></div>
<svg style="left:2602px;top:1015px" width="17" height="10" viewBox="0 0 17 10"><path d="M0.3 0.5 H16.5 L8.4 9.2 Z" fill="#3d3d3d"/></svg>
<div style="left:2670px;top:1004px;width:210px;height:32px;border-radius:16px;background:#e8e9eb"></div>
<svg style="left:2850px;top:1015px" width="17" height="10" viewBox="0 0 17 10"><path d="M0.3 0.5 H16.5 L8.4 9.2 Z" fill="#3d3d3d"/></svg>
</div>
<div style="left:0;top:0;width:3254px;height:1266px;overflow:hidden">
<div style="left:92px;top:1052px;width:142px;height:60px;overflow:hidden">
<div class="t" style="left:16.5px;top:16.42px;font-size:26.67px;color:#3d3d3d;font-weight:400;">0015</div>
</div>
<div style="left:2394px;top:1064px;width:238px;height:32px;border-radius:16px;background:#e8e9eb"></div>
<svg style="left:2602px;top:1075px" width="17" height="10" viewBox="0 0 17 10"><path d="M0.3 0.5 H16.5 L8.4 9.2 Z" fill="#3d3d3d"/></svg>
<div style="left:2670px;top:1064px;width:210px;height:32px;border-radius:16px;background:#e8e9eb"></div>
<svg style="left:2850px;top:1075px" width="17" height="10" viewBox="0 0 17 10"><path d="M0.3 0.5 H16.5 L8.4 9.2 Z" fill="#3d3d3d"/></svg>
</div>
<div style="left:0;top:0;width:3254px;height:1266px;overflow:hidden">
<div style="left:92px;top:1112px;width:142px;height:60px;overflow:hidden">
<div class="t" style="left:16.5px;top:16.42px;font-size:26.67px;color:#3d3d3d;font-weight:400;">0016</div>
</div>
<div style="left:2394px;top:1124px;width:238px;height:32px;border-radius:16px;background:#e8e9eb"></div>
<svg style="left:2602px;top:1135px" width="17" height="10" viewBox="0 0 17 10"><path d="M0.3 0.5 H16.5 L8.4 9.2 Z" fill="#3d3d3d"/></svg>
<div style="left:2670px;top:1124px;width:210px;height:32px;border-radius:16px;background:#e8e9eb"></div>
<svg style="left:2850px;top:1135px" width="17" height="10" viewBox="0 0 17 10"><path d="M0.3 0.5 H16.5 L8.4 9.2 Z" fill="#3d3d3d"/></svg>
</div>
<div style="left:0;top:0;width:3254px;height:1266px;overflow:hidden">
<div style="left:92px;top:1172px;width:142px;height:60px;overflow:hidden">
<div class="t" style="left:16.5px;top:16.42px;font-size:26.67px;color:#3d3d3d;font-weight:400;">0017</div>
</div>
<div style="left:2394px;top:1184px;width:238px;height:32px;border-radius:16px;background:#e8e9eb"></div>
<svg style="left:2602px;top:1195px" width="17" height="10" viewBox="0 0 17 10"><path d="M0.3 0.5 H16.5 L8.4 9.2 Z" fill="#3d3d3d"/></svg>
<div style="left:2670px;top:1184px;width:210px;height:32px;border-radius:16px;background:#e8e9eb"></div>
<svg style="left:2850px;top:1195px" width="17" height="10" viewBox="0 0 17 10"><path d="M0.3 0.5 H16.5 L8.4 9.2 Z" fill="#3d3d3d"/></svg>
</div>
<div style="left:0;top:0;width:3254px;height:1266px;overflow:hidden">
<div style="left:92px;top:1232px;width:142px;height:60px;overflow:hidden">
<div class="t" style="left:16.5px;top:16.42px;font-size:26.67px;color:#3d3d3d;font-weight:400;">0018</div>
</div>
<div style="left:2394px;top:1244px;width:238px;height:32px;border-radius:16px;background:#e8e9eb"></div>
<svg style="left:2602px;top:1255px" width="17" height="10" viewBox="0 0 17 10"><path d="M0.3 0.5 H16.5 L8.4 9.2 Z" fill="#3d3d3d"/></svg>
<div style="left:2670px;top:1244px;width:210px;height:32px;border-radius:16px;background:#e8e9eb"></div>
<svg style="left:2850px;top:1255px" width="17" height="10" viewBox="0 0 17 10"><path d="M0.3 0.5 H16.5 L8.4 9.2 Z" fill="#3d3d3d"/></svg>
</div>
<svg style="left:3220px;top:475px" width="6" height="16" viewBox="0 0 6 16"><rect x="1.8" y="0.8" width="2.2" height="2.2" fill="#333"/><rect x="0.9" y="6.6" width="3.1" height="2.2" fill="#333"/><path d="M2.9 8.5 H4 L3.7 14 H2.6 Z" fill="#333"/></svg>
<div style="left:0px;top:1266px;width:3224px;height:2px;background:#e0e0e0;"></div>
<div style="left:0px;top:1268px;width:746px;height:24px;background:#f8f8f8;"></div>
<div style="left:746px;top:1266px;width:8px;height:26px;background:#dce1ea;"></div>
<div style="left:754px;top:1268px;width:2470px;height:24px;background:#ffffff;"></div>
<div style="left:757px;top:1270px;width:512px;height:18px;border-radius:9px;background:#dadce0"></div>
<div style="left:3163px;top:1268px;width:2px;height:24px;background:#e8e8e8;"></div>
<div style="left:3165px;top:1268px;width:59px;height:24px;background:#ffffff;"></div>
<div style="left:3194px;top:1268px;width:2px;height:24px;background:#e8e8e8;"></div>
<svg style="left:3173px;top:1273px" width="12" height="14" viewBox="0 0 12 14"><path d="M9 1 V13 L2 7 Z" fill="#8e8e8e"/></svg>
<svg style="left:3204px;top:1273px" width="12" height="14" viewBox="0 0 12 14"><path d="M3 1 V13 L10 7 Z" fill="#8e8e8e"/></svg>
<div style="left:3224px;top:1266px;width:2px;height:26px;background:#e0e0e0;"></div>
<div style="left:3226px;top:1266px;width:22px;height:26px;background:#f5f5f5;"></div>
<div style="left:3226px;top:212px;width:22px;height:1054px;background:#ffffff;"></div>
<div style="left:3228px;top:214px;width:18px;height:52px;border-radius:9px;background:#dadce0"></div>
<div style="left:3226px;top:1202px;width:22px;height:2px;background:#e0e0e0;"></div>
<div style="left:3226px;top:1204px;width:22px;height:30px;background:#f5f5f5;"></div>
<div style="left:3226px;top:1234px;width:22px;height:2px;background:#e0e0e0;"></div>
<div style="left:3226px;top:1236px;width:22px;height:30px;background:#f5f5f5;"></div>
<svg style="left:3230px;top:1211px" width="14" height="12" viewBox="0 0 14 12"><path d="M1 9 H13 L7 2 Z" fill="#8e8e8e"/></svg>
<svg style="left:3230px;top:1244px" width="14" height="12" viewBox="0 0 14 12"><path d="M1 3 H13 L7 10 Z" fill="#8e8e8e"/></svg>
<div style="left:0px;top:1292px;width:3254px;height:2px;background:#e0e0e0;"></div>
<div style="left:0px;top:1294px;width:3254px;height:72px;background:#f9fafb;"></div>
<svg style="left:112px;top:1321px" width="22" height="22" viewBox="0 0 22 22"><rect x="9.3" y="0" width="3" height="21" fill="#444"/><rect x="0.6" y="8.8" width="20.4" height="3" fill="#444"/></svg>
<svg style="left:189px;top:1321px" width="28" height="20" viewBox="0 0 28 20"><rect x="0" y="1" width="28" height="3" fill="#444"/><rect x="0" y="8.8" width="28" height="3" fill="#444"/><rect x="0" y="16" width="28" height="3" fill="#444"/></svg>
<div style="left:267px;top:1294px;width:313px;height:72px;background:#e1e7f5;"></div>
<div style="left:269px;top:1360px;width:309px;height:6px;background:#3e7881;"></div>
<div class="t" style="left:292px;top:1317.87px;font-size:28.5px;color:#1d54cf;font-weight:700;letter-spacing:0.7px">Fiches_Patients</div>
<svg style="left:540px;top:1328px" width="17" height="10" viewBox="0 0 17 10"><path d="M0 0.5 H16.5 L8.25 9 Z" fill="#1d54cf"/></svg>
<div class="t" style="left:605px;top:1317.87px;font-size:28.5px;color:#3d3d3d;font-weight:400;letter-spacing:0.33px">Feuille 12</div>
<svg style="left:753px;top:1328px" width="17" height="10" viewBox="0 0 17 10"><path d="M0 0.5 H16.5 L8.25 9 Z" fill="#3d3d3d"/></svg>
<div style="left:795px;top:1360px;width:279px;height:6px;background:#b0652a;"></div>
<div class="t" style="left:820px;top:1317.87px;font-size:28.5px;color:#3d3d3d;font-weight:400;letter-spacing:1.55px">Consultations</div>
<svg style="left:1034px;top:1328px" width="17" height="10" viewBox="0 0 17 10"><path d="M0 0.5 H16.5 L8.25 9 Z" fill="#3d3d3d"/></svg>
<div style="left:1076px;top:1360px;width:143px;height:6px;background:#674ea7;"></div>
<div class="t" style="left:1100px;top:1317.87px;font-size:28.5px;color:#3d3d3d;font-weight:400;letter-spacing:-2px">RDV</div>
<svg style="left:1179px;top:1328px" width="17" height="10" viewBox="0 0 17 10"><path d="M0 0.5 H16.5 L8.25 9 Z" fill="#3d3d3d"/></svg>
<div style="left:1221px;top:1360px;width:288px;height:6px;background:#fbdb6f;"></div>
<div class="t" style="left:1245px;top:1317.87px;font-size:28.5px;color:#3d3d3d;font-weight:400;letter-spacing:1.55px">Salle d&#x27;attente</div>
<svg style="left:1469px;top:1328px" width="17" height="10" viewBox="0 0 17 10"><path d="M0 0.5 H16.5 L8.25 9 Z" fill="#3d3d3d"/></svg>
</body></html>
